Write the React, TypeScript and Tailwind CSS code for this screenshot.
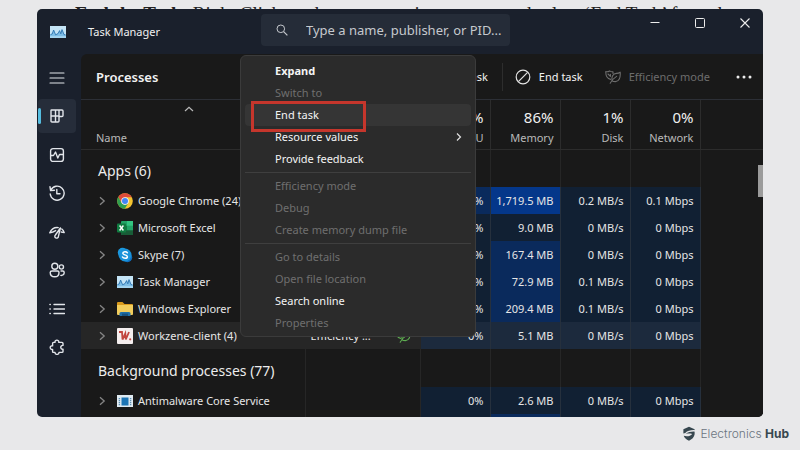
import type { ReactNode } from "react";

type Heat = "none" | "low" | "mid" | "high" | "selected";

const heatClass: Record<Heat, string> = {
  none: "",
  low: "bg-[#112033]",
  mid: "bg-[#0a2a5c]",
  high: "bg-[#04378a]",
  selected: "bg-[#1c2a3d]",
};

type Process = {
  name: string;
  icon: ReactNode;
  cpu: string;
  memory: string;
  disk: string;
  network: string;
  memoryHeat: Heat;
  cpuHeat?: Heat;
  selected?: boolean;
  status?: string;
};

function TaskManagerIcon() {
  return (
    <svg viewBox="0 0 16 12" className="h-3 w-4 shrink-0" aria-hidden="true">
      <rect width="16" height="12" fill="#c4e4f6" />
      <path d="M0 8.5 L2.2 8 L3.6 4 L5.6 8.8 L8 7.6 L9.6 4.6 L10.8 7.8 L12 3.6 L14 8.6 L16 8.8 V10.6 H0Z" fill="#7dbde6" />
      <path d="M0.6 8.5 L2.2 8 L3.6 4 L5.6 8.8 L8 7.6 L9.6 4.6 L10.8 7.8 L12 3.6 L14 8.6 L15.4 8.8" fill="none" stroke="#2a73b0" strokeWidth="0.9" />
      <rect x="0" y="10.6" width="16" height="1.4" fill="#a4d5f1" />
    </svg>
  );
}

function ChromeIcon() {
  return (
    <svg viewBox="0 0 16 16" className="size-4 shrink-0" aria-hidden="true">
      <circle cx="8" cy="8" r="7.8" fill="#f4c430" />
      <path d="M8 4.2 H14.8 A7.8 7.8 0 0 0 1.25 4.1 L4.7 10Z" fill="#dd4b3a" />
      <path d="M1.25 4.1 A7.8 7.8 0 0 0 7.8 15.8 L11.3 9.9 L8 12 L4.7 10Z" fill="#2f9e4f" />
      <circle cx="8" cy="8" r="3.8" fill="#f5f5f5" />
      <circle cx="8" cy="8" r="3" fill="#4285f4" />
    </svg>
  );
}

function ExcelIcon() {
  return (
    <svg viewBox="0 0 16 16" className="size-4 shrink-0" aria-hidden="true">
      <rect x="4" y="1" width="12" height="14" rx="1" fill="#21a366" />
      <rect x="10" y="1" width="6" height="4.7" fill="#33c481" />
      <rect x="4" y="5.7" width="6" height="4.7" fill="#107c41" />
      <rect x="4" y="10.3" width="12" height="4.7" fill="#185c37" />
      <rect x="0" y="3.5" width="9" height="9" rx="1" fill="#107c41" />
      <path d="M2.6 5.5 L6.4 10.5 M6.4 5.5 L2.6 10.5" stroke="#fff" strokeWidth="1.4" />
    </svg>
  );
}

function SkypeIcon() {
  return (
    <svg viewBox="0 0 16 16" className="size-4 shrink-0" aria-hidden="true">
      <circle cx="5.5" cy="5.5" r="4.7" fill="#1b9ae0" />
      <circle cx="10.5" cy="10.5" r="4.7" fill="#0f6fc0" />
      <circle cx="8" cy="8" r="6.5" fill="#1a93da" />
      <path d="M10.4 5.8 C9.6 4.4 5.8 4.3 5.8 6.3 C5.8 8.3 10.4 7.4 10.4 9.7 C10.4 11.8 6.3 11.6 5.5 10" fill="none" stroke="#fff" strokeWidth="1.5" strokeLinecap="round" />
    </svg>
  );
}

function FolderIcon() {
  return (
    <svg viewBox="0 0 16 16" className="size-4 shrink-0" aria-hidden="true">
      <path d="M0 2 Q0 1 1 1 H5.5 L7.5 3 H15 Q16 3 16 4 V7 H0Z" fill="#d99a1c" />
      <path d="M0 4 H16 V13 Q16 14 15 14 H1 Q0 14 0 13Z" fill="#f2cd5c" />
      <path d="M2.5 15 V12.5 Q2.5 11 4 11 H12 Q13.5 11 13.5 12.5 V15Z" fill="#1f6fa8" />
      <rect x="5" y="12.6" width="6" height="2.4" fill="#17517d" />
    </svg>
  );
}

function WorkzeneIcon() {
  return (
    <svg viewBox="0 0 16 16" className="size-4 shrink-0" aria-hidden="true">
      <rect width="16" height="16" rx="1" fill="#f4eeee" />
      <path d="M2 4 H5 L5.5 11.5 L8.3 5.5 L8.8 11.5 L12 4" fill="none" stroke="#c2473f" strokeWidth="1.8" />
      <circle cx="13.2" cy="11.3" r="1.1" fill="#c2473f" />
    </svg>
  );
}

function AntimalwareIcon() {
  return (
    <svg viewBox="0 0 16 12" className="h-3 w-4 shrink-0" aria-hidden="true">
      <rect width="16" height="12" fill="#dfeaf2" />
      <rect x="4.5" y="2.5" width="7" height="8" fill="#1c74b4" />
      <path d="M2.4 3 V11 M13.6 3 V11" stroke="#5b8fb5" strokeWidth="1.4" strokeDasharray="1.2 0.8" />
    </svg>
  );
}

function LeafIcon({ className }: { className: string }) {
  return (
    <svg viewBox="0 0 16 14" className={className} fill="none" stroke="currentColor" strokeWidth="1.1" strokeLinecap="round" strokeLinejoin="round" aria-hidden="true">
      <path d="M5.6 9.4 C2.2 8.8 0.6 6.4 0.8 1.6 C2.4 2 3.4 1.6 4.6 0.9 C5.8 1.8 7 1.9 8 1.9 V3.4" />
      <path d="M3 4 L5.4 6.4 V4.4" />
      <path d="M7.4 11 C6 7 8 3.6 11.4 3.4 C13 3.3 14 3 15.2 2.2 C15.6 8 14 11.4 10.4 11.6 C9 11.6 8 11.4 7.4 11Z" />
      <path d="M5.2 13.2 C6.5 10.8 8.6 8.2 11.6 6.4" />
    </svg>
  );
}

const processes: Process[] = [
  { name: "Google Chrome (24)", icon: <ChromeIcon />, cpu: "0%", memory: "1,719.5 MB", disk: "0.2 MB/s", network: "0.1 Mbps", memoryHeat: "high", cpuHeat: "mid" },
  { name: "Microsoft Excel", icon: <ExcelIcon />, cpu: "0%", memory: "9.0 MB", disk: "0 MB/s", network: "0 Mbps", memoryHeat: "low" },
  { name: "Skype (7)", icon: <SkypeIcon />, cpu: "0%", memory: "167.4 MB", disk: "0 MB/s", network: "0 Mbps", memoryHeat: "mid" },
  { name: "Task Manager", icon: <TaskManagerIcon />, cpu: "0%", memory: "72.9 MB", disk: "0.1 MB/s", network: "0 Mbps", memoryHeat: "mid" },
  { name: "Windows Explorer", icon: <FolderIcon />, cpu: "0%", memory: "209.4 MB", disk: "0.1 MB/s", network: "0 Mbps", memoryHeat: "mid" },
  { name: "Workzene-client (4)", icon: <WorkzeneIcon />, cpu: "0%", memory: "5.1 MB", disk: "0 MB/s", network: "0 Mbps", memoryHeat: "selected", selected: true, status: "Efficiency ..." },
];

const background: Process[] = [
  { name: "Antimalware Core Service", icon: <AntimalwareIcon />, cpu: "0%", memory: "2.6 MB", disk: "0 MB/s", network: "0 Mbps", memoryHeat: "low" },
];

const columns = [
  { label: "CPU", value: "9%" },
  { label: "Memory", value: "86%" },
  { label: "Disk", value: "1%" },
  { label: "Network", value: "0%" },
];

type MenuItem = { label: string; enabled: boolean; bold?: boolean; active?: boolean; submenu?: boolean };

const menuGroups: MenuItem[][] = [
  [
    { label: "Expand", enabled: true, bold: true },
    { label: "Switch to", enabled: false },
    { label: "End task", enabled: true, active: true },
    { label: "Resource values", enabled: true, submenu: true },
    { label: "Provide feedback", enabled: true },
  ],
  [
    { label: "Efficiency mode", enabled: false },
    { label: "Debug", enabled: false },
    { label: "Create memory dump file", enabled: false },
  ],
  [
    { label: "Go to details", enabled: false },
    { label: "Open file location", enabled: false },
    { label: "Search online", enabled: true },
    { label: "Properties", enabled: false },
  ],
];

const navItems: { label: string; drawing: ReactNode }[] = [
  { label: "Menu", drawing: <path d="M1 3 H15 M1 8 H15 M1 13 H15" strokeWidth="1.1" /> },
  { label: "Processes", drawing: <path d="M2.5 2 H6.5 V14 H3 Q2 14 2 13 V2.5 Q2 2 2.5 2Z M2 8 H10 V13 Q10 14 9 14 H6.5 M6.5 2 H13 Q14 2 14 3 V7.5 Q14 8.5 13 8.5 H10 V2" /> },
  { label: "Performance", drawing: <><rect x="1.6" y="1.6" width="12.8" height="12.8" rx="2.4" /><path d="M2 8.5 H4.5 L6.5 5 L8.8 11 L10.5 7.5 H14" /></> },
  { label: "App history", drawing: <><path d="M1.8 5.2 A7 7 0 1 1 1.2 9" /><path d="M1 1.8 L1.6 5.6 L5.4 5.2 M7.8 4.4 V8.8 H11" /></> },
  { label: "Startup apps", drawing: <><path d="M0.8 8.8 C2.4 5 5.4 3.2 9.2 3.6 M12.8 5 C14 6 14.8 7.2 15.2 8.6 M0.8 8.8 L3.8 8 L6.6 6.6 M12.2 8 L15.2 8.6" /><path d="M11.4 4 L6.4 11 A1.8 1.8 0 1 0 9.4 12.4 Z" /></> },
  { label: "Users", drawing: <><circle cx="5.8" cy="4.2" r="3" /><circle cx="12.4" cy="5" r="2.1" /><path d="M3 9 H8.6 Q10 9 10 10.4 C10 13.4 8.4 14.8 5.8 14.8 C3.2 14.8 1.2 13.4 1.2 10.4 Q1.2 9 3 9Z M12 9 H13.8 Q15.2 9 15.2 10.4 C15.2 12.6 13.8 13.6 11.8 13.4" /></> },
  { label: "Details", drawing: <path d="M5 3.5 H15.5 M5 8 H15.5 M5 12.5 H15.5 M0.9 3.5 H1.3 M0.9 8 H1.3 M0.9 12.5 H1.3" /> },
  { label: "Services", drawing: <path d="M6 3.4 C5.6 0.4 10.2 0.4 9.8 3.4 H13 Q14 3.4 14 4.4 V6.4 C11 6 11 10.6 14 10.2 V12.4 Q14 13.4 13 13.4 H10 C10 16 6 16 6 13.4 H4.6 Q3.6 13.4 3.6 12.4 V10.4 C0.4 10.8 0.4 6.4 3.6 6.8 V4.4 Q3.6 3.4 4.6 3.4Z" /> },
];

function GroupRow({ title }: { title: string }) {
  return (
    <tr className="h-[38px]">
      <th scope="rowgroup" className="border-r border-[#262626] p-0 pt-1.5 pl-[17px] text-left text-[14px] leading-5 font-normal whitespace-nowrap text-[#ececec]">
        {title}
      </th>
      {[0, 1, 2, 3, 4].map((i) => (
        <td key={i} className="border-r border-[#262626] p-0" />
      ))}
      <td className="p-0" />
    </tr>
  );
}

function ProcessRow({ process }: { process: Process }) {
  const base: Heat = process.selected ? "selected" : "low";
  const cells: [string, Heat][] = [
    [process.cpu, process.cpuHeat ?? base],
    [process.memory, process.memoryHeat],
    [process.disk, base],
    [process.network, base],
  ];
  return (
    <tr className={"h-[27px] " + (process.selected ? "bg-[#262626]" : "")}>
      <td className="border-r border-[#262626] p-0 pl-[17px]">
        <div className="flex items-center whitespace-nowrap">
          <svg viewBox="0 0 8 10" className="mr-[11px] h-2.5 w-2 shrink-0 fill-none stroke-[#858585]" aria-hidden="true">
            <path d="M2 1.2 L6.2 5 L2 8.8" strokeWidth="1.3" />
          </svg>
          {process.icon}
          <span className="ml-[5px]">{process.name}</span>
        </div>
      </td>
      <td className="border-r border-[#262626] p-0 pl-[5px]">
        {process.status && (
          <div className="flex items-center justify-between pr-[9px]">
            {process.status}
            <LeafIcon className="h-[14px] w-4 text-[#5fae52]" />
          </div>
        )}
      </td>
      {cells.map(([value, heat], i) => (
        <td key={i} className={"border-r border-[#26303d] p-0 pr-1.5 text-right whitespace-nowrap " + heatClass[heat]}>
          {value}
        </td>
      ))}
      <td className="bg-[#191919] p-0" />
    </tr>
  );
}

function ContextMenu() {
  return (
    <div role="menu" className="absolute top-[46px] left-[203px] w-[236px] rounded-md border border-[#3b3b3b] bg-[#2b2b2b] px-1 pt-1 pb-0.5">
      {menuGroups.map((group, g) => (
        <div key={g} className={g > 0 ? "mt-0.5 border-t border-[#3f3f3f] pt-0.5" : ""}>
          {group.map((item) => (
            <button
              key={item.label}
              role="menuitem"
              disabled={!item.enabled}
              className={
                "flex h-[22px] w-full items-center justify-between rounded-sm pr-2 pl-[30px] " +
                (item.enabled ? "text-[#f4f4f4] " : "text-[#6f6f6f] ") +
                (item.bold ? "font-bold " : "") +
                (item.active ? "bg-[#353535]" : "")
              }
            >
              {item.label}
              {item.submenu && (
                <svg viewBox="0 0 8 10" className="h-2.5 w-2 fill-none stroke-[#e0e0e0]" aria-hidden="true">
                  <path d="M2 1.5 L5.5 5 L2 8.5" strokeWidth="1.2" />
                </svg>
              )}
            </button>
          ))}
        </div>
      ))}
      <div className="pointer-events-none absolute top-[45px] left-[10px] h-[31px] w-[115px] border-[3px] border-[#c5362c]" />
    </div>
  );
}

export default function App() {
  return (
    <div className="flex h-screen flex-col bg-[#e8e8ea] font-['Noto_Sans','Open_Sans',sans-serif] text-[11px] leading-4 text-[#e6e6e6]">
      <p className="h-[9px] shrink-0 overflow-hidden pt-1 pl-[75px] font-['Liberation_Serif',serif] text-[19px] leading-5 whitespace-nowrap text-[#222]">
        <b>End the Task:</b> Right Click on the unresponsive process and select ‘End Task’ from the
      </p>

      <main className="relative mx-[37px] flex min-h-0 flex-1 flex-col rounded-[5px] bg-[#1a202c]">
        <header className="flex h-[45px] shrink-0 items-start">
          <div className="flex h-11 w-[224px] items-center gap-[22px] pt-px pl-[13px] text-[#f0f0f0]">
            <TaskManagerIcon />
            <h1>Task Manager</h1>
          </div>
          <label className="mt-[5px] flex h-8 w-[249px] items-center rounded bg-[#252c38] pl-[15px]">
            <svg viewBox="0 0 12 12" className="size-3 shrink-0 fill-none stroke-[#c5c8cd]" aria-label="Search">
              <circle cx="4.8" cy="4.8" r="3.8" />
              <path d="M7.6 7.6 L11.4 11.4" strokeWidth="1.2" />
            </svg>
            <input
              type="text"
              placeholder="Type a name, publisher, or PID..."
              className="ml-[18px] min-w-0 flex-1 bg-transparent text-[13px] outline-none placeholder:text-[#c6c9ce]"
            />
          </label>
          <div className="ml-auto flex h-7 items-center gap-[33px] pr-3">
            <button aria-label="Minimize">
              <svg viewBox="0 0 12 12" className="size-3 stroke-[#ededed]"><path d="M1.5 5.5 H10.5" /></svg>
            </button>
            <button aria-label="Maximize">
              <svg viewBox="0 0 12 12" className="size-3 fill-none stroke-[#ededed]"><rect x="1.5" y="1.5" width="9" height="9" rx="1" /></svg>
            </button>
            <button aria-label="Close">
              <svg viewBox="0 0 12 12" className="size-3 stroke-[#ededed]"><path d="M1.5 1.5 L10.5 10.5 M10.5 1.5 L1.5 10.5" strokeWidth="1.1" /></svg>
            </button>
          </div>
        </header>

        <div className="flex min-h-0 flex-1">
          <nav className="w-11 shrink-0 pt-[7px] pl-px">
            <div className="flex h-[303px] flex-col justify-between">
              {navItems.map((item, i) => (
                <button
                  key={item.label}
                  aria-label={item.label}
                  className={"flex h-[34px] w-[38px] items-center rounded-[4px] " + (i === 1 ? "bg-[#262d3a]" : "")}
                >
                  <span className={"h-4 w-[3px] rounded-sm " + (i === 1 ? "bg-[#55bde0]" : "")} />
                  <svg viewBox="0 0 16 16" className="ml-2 size-4 fill-none stroke-[#e2e5ea]" strokeWidth="1.4" strokeLinejoin="round" strokeLinecap="round">
                    {item.drawing}
                  </svg>
                </button>
              ))}
            </div>
          </nav>

          <section className="relative min-w-0 flex-1 overflow-hidden rounded-tl-md rounded-br-[5px] bg-[#191919]">
            <div className="flex h-[46px] items-center border-b border-[#2c2f36] pl-[15px] text-[#f2f2f2]">
              <h2 className="text-[13px] font-semibold">Processes</h2>
              <button className="ml-auto">Run new task</button>
              <span className="ml-[14px] h-7 w-px bg-[#2d2d2d]" />
              <button className="ml-3 flex items-center gap-2">
                <svg viewBox="0 0 16 16" className="size-4 fill-none stroke-[#e4e4e4]" strokeWidth="1.2" aria-hidden="true">
                  <circle cx="8" cy="8" r="6.8" />
                  <path d="M3.4 12.6 L12.6 3.4" />
                </svg>
                End task
              </button>
              <button disabled className="ml-[22px] flex items-center gap-2 text-[#6d6d6d]">
                <LeafIcon className="h-[14px] w-4" />
                Efficiency mode
              </button>
              <button aria-label="More options" className="mr-[11px] ml-[26px]">
                <svg viewBox="0 0 16 4" className="h-1 w-4 fill-[#ececec]">
                  <circle cx="2" cy="2" r="1.5" />
                  <circle cx="8" cy="2" r="1.5" />
                  <circle cx="14" cy="2" r="1.5" />
                </svg>
              </button>
            </div>

            <table className="w-full table-fixed border-collapse">
              <colgroup>
                <col className="w-[224px]" />
                <col className="w-[115px]" />
                <col className="w-[70px]" />
                <col className="w-[70px]" />
                <col className="w-[70px]" />
                <col className="w-[70px]" />
                <col />
              </colgroup>
              <thead>
                <tr className="h-[49px] border-b border-[#2c2c2c]">
                  <th scope="col" className="border-r border-[#2c2c2c] p-0 pb-[3px] pl-[15px] text-left align-bottom font-normal text-[#b9b9b9]">
                    <svg viewBox="0 0 10 6" className="mb-[18px] ml-[88px] h-1.5 w-2.5 fill-none stroke-[#b9b9b9]" aria-hidden="true">
                      <path d="M1 5 L5 1.3 L9 5" strokeWidth="1.2" />
                    </svg>
                    Name
                  </th>
                  <th scope="col" className="border-r border-[#2c2c2c] p-0 pb-[3px] pl-[5px] text-left align-bottom font-normal text-[#b9b9b9]">Status</th>
                  {columns.map((column) => (
                    <th key={column.label} scope="col" className="border-r border-[#2c2c2c] p-0 pr-1.5 pb-[3px] text-right align-bottom font-normal text-[#b9b9b9]">
                      <div className="mb-[3px] text-[15px] leading-5 text-[#f0f0f0]">{column.value}</div>
                      {column.label}
                    </th>
                  ))}
                  <th className="p-0" />
                </tr>
              </thead>
              <tbody>
                <GroupRow title="Apps (6)" />
                {processes.map((process) => (
                  <ProcessRow key={process.name} process={process} />
                ))}
                <GroupRow title="Background processes (77)" />
                {background.map((process) => (
                  <ProcessRow key={process.name} process={process} />
                ))}
                <tr className="h-[27px]">
                  <td className="border-r border-[#262626]" />
                  <td className="border-r border-[#262626]" />
                  <td className="border-r border-[#26303d] bg-[#112033]" />
                  <td className="border-r border-[#26303d] bg-[#0a2a5c]" />
                  <td className="border-r border-[#26303d] bg-[#112033]" />
                  <td className="border-r border-[#26303d] bg-[#112033]" />
                  <td />
                </tr>
              </tbody>
            </table>
            <div className="absolute top-[111px] right-0 h-8 w-[5px] bg-[#9b9b9b]" />
          </section>
        </div>
        <ContextMenu />
      </main>

      <footer className="flex h-[33px] shrink-0 items-center justify-end gap-1 pr-[11px] font-['Inter',sans-serif] text-[12px] text-[#6b7480]">
        <svg viewBox="0 0 14 16" className="h-[15px] w-[14px]" aria-hidden="true">
          <path d="M1 3.4 L7 0.8 L13 3.4 V4.4 C9 4.2 5.4 5 3 7.4 L1 8Z" fill="#37474f" />
          <path d="M3.4 8.6 C6 6.6 9.6 5.8 13 6 V8.8 C12.6 12 10 14.4 7 15.6 C4 14.4 2 12.6 1.4 10.4 C5 11.6 8.6 10.6 10.4 8.4 C8 8 5.6 8 3.4 8.6Z" fill="#37474f" />
        </svg>
        <span className="font-light">
          Electronics <b className="font-bold text-[#37474f]">Hub</b>
        </span>
      </footer>
    </div>
  );
}
